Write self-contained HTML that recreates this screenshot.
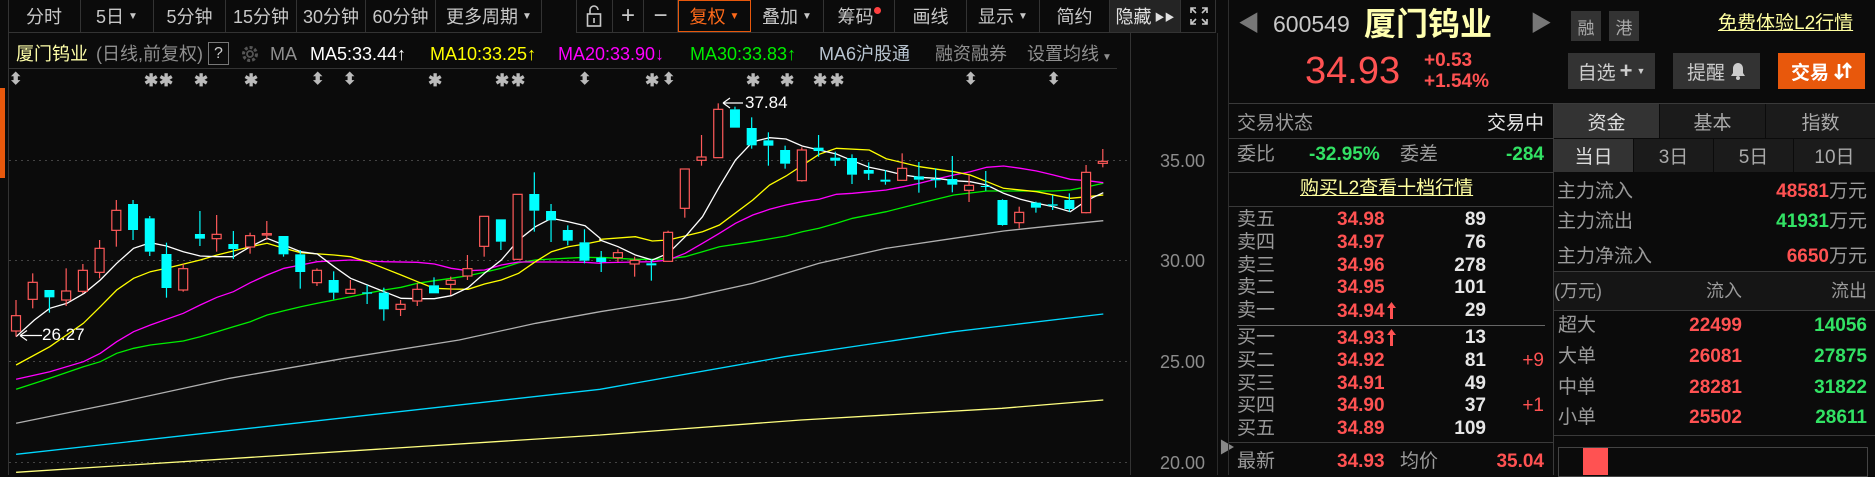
<!DOCTYPE html>
<html><head><meta charset="utf-8">
<style>
*{margin:0;padding:0;box-sizing:border-box}
body{width:1875px;height:475px;background:#0b0b0b;overflow:hidden;position:relative;font-family:"Liberation Sans","Noto Sans CJK SC",sans-serif;color:#c8c8c8}
.t{position:absolute;white-space:nowrap;line-height:1}
.cell{position:absolute;top:0;height:32px;border-right:1px solid #333;display:flex;align-items:center;justify-content:center;font-size:18px;color:#c8c8c8}
.hl{position:absolute;height:1px;background:#333}
.vl{position:absolute;width:1px;background:#333}
.r{color:#ff5252}.g{color:#32e264}.gy{color:#9a9a9a}.w{color:#e6e6e6}
.b{font-weight:bold}
.box{position:absolute;display:flex;align-items:center;justify-content:center}
</style></head><body>

<!-- toolbar -->
<div style="position:absolute;left:8px;top:0;width:534px;height:33px;border:1px solid #333;border-top:none"></div>
<div class="cell" style="left:8px;width:73px">分时</div>
<div class="cell" style="left:81px;width:73px">5日<span style="font-size:10px;margin-left:4px">▼</span></div>
<div class="cell" style="left:154px;width:72px">5分钟</div>
<div class="cell" style="left:226px;width:71px">15分钟</div>
<div class="cell" style="left:297px;width:69px">30分钟</div>
<div class="cell" style="left:366px;width:70px">60分钟</div>
<div class="cell" style="left:436px;width:106px;border-right:none">更多周期<span style="font-size:10px;margin-left:4px">▼</span></div>

<div style="position:absolute;left:576px;top:0;width:640px;height:33px;border:1px solid #333;border-top:none"></div>
<div class="cell" style="left:576px;width:37px">
<svg width="16" height="24" viewBox="0 0 16 24"><path d="M4 10V6a4 4 0 0 1 8 0" fill="none" stroke="#c8c8c8" stroke-width="1.6"/><rect x="1.5" y="10" width="13" height="12" fill="none" stroke="#c8c8c8" stroke-width="1.6"/><rect x="7.2" y="14" width="1.6" height="5" fill="#c8c8c8"/></svg></div>
<div class="cell" style="left:613px;width:31px;font-size:24px">+</div>
<div class="cell" style="left:644px;width:34px;font-size:24px">−</div>
<div class="cell" style="left:678px;width:73px;border:1px solid #e8580c;color:#ff6a1a">复权<span style="font-size:10px;margin-left:4px">▼</span></div>
<div class="cell" style="left:751px;width:73px">叠加<span style="font-size:10px;margin-left:4px">▼</span></div>
<div class="cell" style="left:824px;width:71px">筹码<span style="display:inline-block;width:7px;height:7px;border-radius:50%;background:#ff4040;margin-top:-12px"></span></div>
<div class="cell" style="left:895px;width:72px">画线</div>
<div class="cell" style="left:967px;width:73px">显示<span style="font-size:10px;margin-left:4px">▼</span></div>
<div class="cell" style="left:1040px;width:70px">简约</div>
<div class="cell" style="left:1110px;width:71px;background:#242424;color:#e0e0e0">隐藏<span style="font-size:10px;margin-left:3px">▶▶</span></div>
<div class="cell" style="left:1181px;width:35px;border-right:none">
<svg width="20" height="20" viewBox="0 0 20 20" fill="none" stroke="#c8c8c8" stroke-width="1.6"><path d="M2 7V2h5M2 2l5 5M13 2h5v5M18 2l-5 5M2 13v5h5M2 18l5-5M18 13v5h-5M18 18l-5-5"/></svg></div>

<!-- chart frame -->
<div class="vl" style="left:8px;top:33px;height:442px"></div>
<div style="position:absolute;left:0;top:88px;width:5px;height:90px;background:#e8580c"></div>
<div class="vl" style="left:1130px;top:33px;height:442px"></div>
<div class="vl" style="left:1217px;top:33px;height:442px;background:#2a2a2a"></div>
<div class="hl" style="left:9px;top:68px;width:1108px"></div>

<!-- header -->
<div class="t" style="left:16px;top:45px;font-size:18px;color:#ffffa8">厦门钨业</div>
<div class="t" style="left:96px;top:45px;font-size:18px;color:#8f8f8f">(日线,前复权)</div>
<div class="box" style="left:208px;top:42px;width:21px;height:23px;border:1px solid #777;font-size:16px;color:#ccc">?</div>
<svg style="position:absolute;left:240px;top:44px" width="20" height="20" viewBox="0 0 20 20"><circle cx="10" cy="10" r="6.5" fill="none" stroke="#555" stroke-width="3" stroke-dasharray="3 2"/><circle cx="10" cy="10" r="3" fill="none" stroke="#555" stroke-width="1.8"/></svg>
<div class="t" style="left:270px;top:45px;font-size:18px;color:#8f8f8f">MA</div>
<div class="t" style="left:310px;top:45px;font-size:18px;color:#fff">MA5:33.44↑</div>
<div class="t" style="left:430px;top:45px;font-size:18px;color:#ffff00">MA10:33.25↑</div>
<div class="t" style="left:558px;top:45px;font-size:18px;color:#ff00ff">MA20:33.90↓</div>
<div class="t" style="left:690px;top:45px;font-size:18px;color:#00ee00">MA30:33.83↑</div>
<div class="t" style="left:819px;top:45px;font-size:18px;color:#b8c4d0">MA6沪股通</div>
<div class="t" style="left:935px;top:45px;font-size:18px;color:#8f8f8f">融资融券</div>
<div class="t" style="left:1027px;top:45px;font-size:18px;color:#8f8f8f">设置均线<span style="font-size:10px;margin-left:3px">▼</span></div>

<!-- markers -->
<div id="mk"></div>

<svg id="ch" style="position:absolute;left:0;top:0" width="1220" height="475"></svg>

<!-- y axis -->
<div class="t" style="left:1160px;top:152px;font-size:18px;color:#8c8c8c">35.00</div>
<div class="t" style="left:1160px;top:252px;font-size:18px;color:#8c8c8c">30.00</div>
<div class="t" style="left:1160px;top:353px;font-size:18px;color:#8c8c8c">25.00</div>
<div class="t" style="left:1160px;top:454px;font-size:18px;color:#8c8c8c">20.00</div>
<div class="t" style="left:42px;top:326px;font-size:17px;color:#fff">26.27</div>
<div class="t" style="left:745px;top:94px;font-size:17px;color:#fff">37.84</div>
<div class="t" style="left:1219px;top:441px;font-size:16px;color:#888">▶</div>

<!-- right panel -->
<div class="vl" style="left:1228px;top:0;height:475px;background:#2e2e2e"></div>
<div class="t" style="left:1238px;top:13px;font-size:22px;color:#777">◀</div>
<div class="t" style="left:1273px;top:13px;font-size:23px;color:#c8c8c8">600549</div>
<div class="t b" style="left:1364px;top:8px;font-size:32px;color:#ffffb0">厦门钨业</div>
<div class="t" style="left:1530px;top:13px;font-size:22px;color:#777">▶</div>
<div class="box" style="left:1571px;top:11px;width:30px;height:30px;background:#333;font-size:17px;color:#aaa">融</div>
<div class="box" style="left:1609px;top:11px;width:30px;height:30px;background:#333;font-size:17px;color:#aaa">港</div>
<div class="t" style="left:1718px;top:14px;font-size:19px;color:#ffffa0;text-decoration:underline">免费体验L2行情</div>
<div class="t r" style="left:1305px;top:52px;font-size:38px">34.93</div>
<div class="t r b" style="left:1424px;top:51px;font-size:19px">+0.53</div>
<div class="t r b" style="left:1424px;top:72px;font-size:19px">+1.54%</div>
<div class="box" style="left:1568px;top:53px;width:87px;height:36px;background:#333;font-size:19px;color:#ccc">自选 <b style="font-size:22px;margin:0 4px">+</b><span style="font-size:9px">▼</span></div>
<div class="box" style="left:1673px;top:53px;width:87px;height:36px;background:#333;font-size:19px;color:#ccc">提醒 <svg width="16" height="18" viewBox="0 0 16 18" style="margin-left:5px"><path d="M8 1c-3 0-5 2.5-5 5.5V11l-2 3h14l-2-3V6.5C13 3.5 11 1 8 1z" fill="#ccc"/><circle cx="8" cy="16" r="2" fill="#ccc"/></svg></div>
<div class="box" style="left:1778px;top:53px;width:87px;height:36px;background:#e8580c;font-size:19px;color:#fff;font-weight:bold">交易 <svg width="18" height="18" viewBox="0 0 18 18" style="margin-left:5px"><path d="M5 2v14M1 12l4 4 4-4M13 16V2M9 6l4-4 4 4" fill="none" stroke="#fff" stroke-width="2.6"/></svg></div>
<div class="hl" style="left:1229px;top:103px;width:646px;background:#3a3a3a"></div>

<!-- left subpanel -->
<div class="vl" style="left:1553px;top:103px;height:372px;background:#3a3a3a"></div>
<div class="t gy" style="left:1237px;top:114px;font-size:19px">交易状态</div>
<div class="t w" style="right:331px;top:114px;font-size:19px">交易中</div>
<div class="hl" style="left:1229px;top:138px;width:324px;background:#3a3a3a"></div>
<div class="t gy" style="left:1237px;top:145px;font-size:19px">委比</div>
<div class="t g b" style="left:1309px;top:145px;font-size:19px">-32.95%</div>
<div class="t gy" style="left:1400px;top:145px;font-size:19px">委差</div>
<div class="t g b" style="right:331px;top:145px;font-size:19px">-284</div>
<div class="hl" style="left:1229px;top:172px;width:324px;background:#3a3a3a"></div>
<div class="t" style="left:1300px;top:179px;font-size:19px;color:#ffffa0;text-decoration:underline">购买L2查看十档行情</div>
<div class="hl" style="left:1229px;top:206px;width:324px;background:#3a3a3a"></div>
<div id="ob"></div>
<div class="hl" style="left:1237px;top:325px;width:308px;background:#666"></div>
<div class="hl" style="left:1229px;top:442px;width:324px;background:#3a3a3a"></div>
<div class="t gy" style="left:1237px;top:452px;font-size:19px">最新</div>
<div class="t r b" style="left:1337px;top:452px;font-size:19px">34.93</div>
<div class="t gy" style="left:1400px;top:452px;font-size:19px">均价</div>
<div class="t r b" style="right:331px;top:452px;font-size:19px">35.04</div>

<!-- right subpanel -->
<div class="box" style="left:1554px;top:104px;width:105px;height:34px;background:#333;font-size:19px;color:#ddd">资金</div>
<div class="box" style="left:1660px;top:104px;width:105px;height:34px;background:#1b1b1b;font-size:19px;color:#aaa">基本</div>
<div class="box" style="left:1766px;top:104px;width:109px;height:34px;background:#1b1b1b;font-size:19px;color:#aaa">指数</div>
<div class="box" style="left:1554px;top:139px;width:79px;height:33px;background:#333;font-size:19px;color:#ddd">当日</div>
<div class="box" style="left:1634px;top:139px;width:79px;height:33px;background:#1b1b1b;font-size:19px;color:#aaa">3日</div>
<div class="box" style="left:1714px;top:139px;width:79px;height:33px;background:#1b1b1b;font-size:19px;color:#aaa">5日</div>
<div class="box" style="left:1794px;top:139px;width:81px;height:33px;background:#1b1b1b;font-size:19px;color:#aaa">10日</div>
<div class="t gy" style="left:1557px;top:182px;font-size:19px">主力流入</div>
<div class="t" style="right:8px;top:182px;font-size:19px"><b class="r">48581</b><span class="gy">万元</span></div>
<div class="t gy" style="left:1557px;top:212px;font-size:19px">主力流出</div>
<div class="t" style="right:8px;top:212px;font-size:19px"><b class="g">41931</b><span class="gy">万元</span></div>
<div class="t gy" style="left:1557px;top:247px;font-size:19px">主力净流入</div>
<div class="t" style="right:8px;top:247px;font-size:19px"><b class="r">6650</b><span class="gy">万元</span></div>
<div class="hl" style="left:1554px;top:271px;width:321px;background:#3a3a3a"></div>
<div style="position:absolute;left:1554px;top:272px;width:321px;height:38px;background:#151515"></div>
<div class="t gy" style="left:1554px;top:282px;font-size:18px">(万元)</div>
<div class="t gy" style="right:133px;top:282px;font-size:18px">流入</div>
<div class="t gy" style="right:8px;top:282px;font-size:18px">流出</div>
<div class="hl" style="left:1554px;top:310px;width:321px;background:#3a3a3a"></div>
<div id="ff"></div>
<div class="hl" style="left:1554px;top:435px;width:321px;background:#3a3a3a"></div>
<div style="position:absolute;left:1558px;top:447px;width:310px;height:30px;border:1px solid #444"></div>
<div style="position:absolute;left:1583px;top:448px;width:25px;height:27px;background:#ff5252"></div>

<script>
var ob=[["卖五","34.98","89",""],["卖四","34.97","76",""],["卖三","34.96","278",""],["卖二","34.95","101",""],["卖一","34.94","29","",1],
["买一","34.93","13","",1],["买二","34.92","81","+9"],["买三","34.91","49",""],["买四","34.90","37","+1"],["买五","34.89","109",""]];
var h="";
var arr='<svg width="11" height="18" viewBox="0 0 11 18" style="margin-left:1px;vertical-align:-2px"><path d="M5.5 1L1 7h3v11h3V7h3z" fill="#ff5252"/></svg>';
ob.forEach(function(o,i){var c=(i<5?220:338)+ (i%5)*22.8;var t=c-10;
h+='<div class="t gy" style="left:1237px;top:'+t+'px;font-size:19px">'+o[0]+'</div>';
h+='<div class="t r b" style="left:1337px;top:'+t+'px;font-size:19px">'+o[1]+(o[4]?arr:'')+'</div>';
h+='<div class="t w b" style="right:389px;top:'+t+'px;font-size:19px">'+o[2]+'</div>';
if(o[3])h+='<div class="t r" style="right:331px;top:'+t+'px;font-size:19px">'+o[3]+'</div>';});
document.getElementById('ob').innerHTML=h;
var ff=[["超大","22499","14056",326],["大单","26081","27875",357],["中单","28281","31822",388],["小单","25502","28611",418]];h="";
ff.forEach(function(f){var t=f[3]-10;h+='<div class="t gy" style="left:1558px;top:'+t+'px;font-size:19px">'+f[0]+'</div><div class="t r b" style="right:133px;top:'+t+'px;font-size:19px">'+f[1]+'</div><div class="t g b" style="right:8px;top:'+t+'px;font-size:19px">'+f[2]+'</div>';});
document.getElementById('ff').innerHTML=h;
var mk=[[15,1],[150,0],[165,0],[200,0],[250,0],[317,1],[349,1],[434,0],[501,0],[517,0],[584,1],[651,0],[668,1],[752,0],[786,0],[819,0],[836,0],[970,1],[1053,1]];h="";
mk.forEach(function(m){h+='<div class="t" style="left:'+(m[0]-6)+'px;top:72px;font-size:'+(m[1]?16:17)+'px;color:#bbb;font-weight:bold">'+(m[1]?'⬍':'✱')+'</div>';});
document.getElementById('mk').innerHTML=h;
var NS="http://www.w3.org/2000/svg",svg=document.getElementById('ch');
function el(n,a){var e=document.createElementNS(NS,n);for(var k in a)e.setAttribute(k,a[k]);svg.appendChild(e);return e;}
[160,260,361,462].forEach(function(y){el('line',{x1:9,x2:1130,y1:y+.5,y2:y+.5,stroke:'#444','stroke-dasharray':'2 4'});});
function Y(p){return p/3+60;}
var C=[['R',767,813,720,830],['R',667,718,640,745],['C',690,712,690,758],['R',693,720,625,738],['R',631,694,612,700],['R',565,637,540,655],['R',451,511,420,560],['C',432,510,420,540],['C',475,575,468,588],['C',582,684,548,713],['R',626,690,612,695],['C',522,536,453,558],['R',523,536,465,575],['C',552,567,513,597],['R',527,561,518,581],['R',521,525,483,540],['C',528,583,528,590],['C',583,636,570,686],['R',631,668,625,678],['C',660,698,634,718],['R',688,700,660,702],['C',697,701,675,732],['C',698,748,683,782],['R',733,748,720,768],['R',688,723,670,738],['C',676,700,652,700],['R',661,673,650,705],['R',626,648,585,660],['R',469,559,469,590],['C',478,545,478,570],['R',403,598,403,600],['C',402,452,337,515],['C',453,481,432,546],['C',510,542,496,556],['C',547,602,508,610],
['C',593,606,573,636],['R',578,593,568,606],['R',601,612,590,650],['C',610,616,598,662],['R',517,604,512,604],['R',327,445,327,473],['R',291,301,225,317],['R',148,293,130,293],['C',148,203,140,203],['C',204,256,172,266],['C',241,257,217,317],['C',270,311,257,326],['R',270,362,262,365],['C',263,273,225,290],['C',293,302,275,318],['C',294,344,283,372],['C',330,341,307,360],['C',359,365,330,374],['R',325,361,280,361],['C',349,359,306,398],['C',357,361,325,383],['C',357,374,288,397],['R',376,391,346,426],['C',378,381,333,392],['C',420,495,418,497],['R',457,488,440,505],['C',428,443,425,458],['C',433,437,405,450],['C',420,447,400,455],['R',337,458,315,460],['R',304,310,267,322]];
function L(a,b,col){var pts=[];a.forEach(function(p){pts.push((p[0]*0.3827).toFixed(1)+','+Y(p[1]).toFixed(1));});b.forEach(function(p){pts.push((600+p[0]*0.402).toFixed(1)+','+Y(p[1]).toFixed(1));});el('polyline',{points:pts.join(' '),fill:'none',stroke:col,'stroke-width':1.3});}
L([[42,1237],[1568,1125]],[[0,1125],[500,1080],[1000,1045],[1252,1020]],'#ffff80');
L([[42,1183],[1568,988]],[[0,988],[460,890],[880,815],[1252,762]],'#00d8ff');
L([[42,1090],[300,1030],[600,955],[900,895],[1200,840],[1400,790],[1568,755]],[[0,755],[210,715],[380,670],[545,610],[712,565],[880,535],[1004,513],[1128,497],[1252,482]],'#b0b0b0');
L([[42,988],[130,955],[218,920],[262,905],[305,880],[349,865],[393,855],[479,843],[523,830],[567,815],[610,800],[654,785],[698,765],[742,752],[786,740],[829,730],[873,720],[916,710],[960,700],[1004,690],[1048,682],[1091,670],[1135,662],[1179,655],[1223,647],[1266,637],[1310,625],[1355,608],[1399,600],[1441,597],[1529,592],[1568,593]],[[0,592],[88,598],[130,598],[170,596],[212,590],[255,575],[297,560],[380,545],[463,528],[503,515],[545,505],[588,490],[628,475],[712,455],[795,430],[880,405],[962,393],[1046,393],[1128,393],[1170,390],[1213,380],[1252,370]],'#00ee00');
L([[42,958],[130,935],[218,905],[262,880],[305,845],[349,815],[393,795],[479,760],[523,735],[567,712],[610,695],[654,668],[698,645],[742,625],[786,615],[829,605],[916,600],[1004,605],[1091,607],[1135,612],[1179,625],[1223,632],[1266,630],[1310,615],[1355,606],[1441,606],[1529,607],[1568,610]],[[0,608],[130,605],[170,600],[212,580],[255,550],[297,520],[337,490],[380,465],[422,448],[463,435],[503,425],[545,418],[588,403],[628,400],[670,395],[712,390],[755,380],[795,370],[837,357],[880,345],[921,335],[962,322],[1004,318],[1046,325],[1086,333],[1128,345],[1170,358],[1213,362],[1252,368]],'#ff00ff');
L([[42,915],[130,860],[218,790],[262,740],[305,690],[349,655],[393,635],[435,625],[523,600],[567,585],[654,560],[698,550],[742,565],[786,578],[873,585],[916,590],[960,605],[1004,625],[1048,645],[1091,665],[1135,685],[1179,687],[1223,688],[1266,672],[1310,660],[1355,640],[1399,605],[1441,575],[1485,560],[1529,552],[1568,543]],[[0,538],[88,530],[130,543],[170,540],[255,515],[297,495],[380,420],[422,375],[463,348],[545,283],[588,265],[670,270],[712,296],[795,320],[880,335],[921,345],[1004,385],[1086,395],[1170,415],[1213,410],[1252,405]],'#ffff00');
L([[42,830],[90,780],[130,745],[175,730],[220,700],[262,660],[305,610],[349,565],[393,548],[435,558],[479,575],[523,588],[567,590],[610,590],[654,560],[698,535],[742,555],[786,575],[829,582],[873,620],[916,655],[960,675],[1004,695],[1048,715],[1091,716],[1135,716],[1179,707],[1223,683],[1266,640],[1310,600],[1355,540],[1399,500],[1441,475],[1485,485],[1529,497],[1568,535]],[[0,540],[45,560],[88,585],[130,600],[170,580],[212,530],[255,470],[297,380],[337,300],[380,245],[422,233],[463,237],[503,258],[545,270],[588,282],[628,302],[670,322],[712,332],[755,345],[795,352],[837,355],[880,362],[921,365],[962,375],[1004,400],[1046,418],[1086,430],[1128,440],[1170,455],[1213,420],[1252,398]],'#ffffff');
C.forEach(function(c,i){var x=16+16.72*i,col=c[0]=='R'?'#ff5a5a':'#00ffff';
var bt=Y(c[1]),bb=Y(c[2]),wt=Y(c[3]),wb=Y(c[4]);
el('line',{x1:x,x2:x,y1:wt,y2:bt,stroke:col,'stroke-width':1.2});
el('line',{x1:x,x2:x,y1:bb,y2:wb,stroke:col,'stroke-width':1.2});
var hgt=Math.max(bb-bt,1);
if(c[0]=='R')el('rect',{x:x-4.5,y:bt,width:9,height:hgt,fill:'#0b0b0b',stroke:col,'stroke-width':1.2});
else el('rect',{x:x-5,y:bt,width:10,height:hgt,fill:col});});
el('path',{d:'M20 335.5h22M20 335.5l7-5M20 335.5l7 5',stroke:'#fff',fill:'none','stroke-width':1.2});
el('path',{d:'M723 103h20M723 103l7-5M723 103l7 5',stroke:'#fff',fill:'none','stroke-width':1.2});
</script>
</body></html>
